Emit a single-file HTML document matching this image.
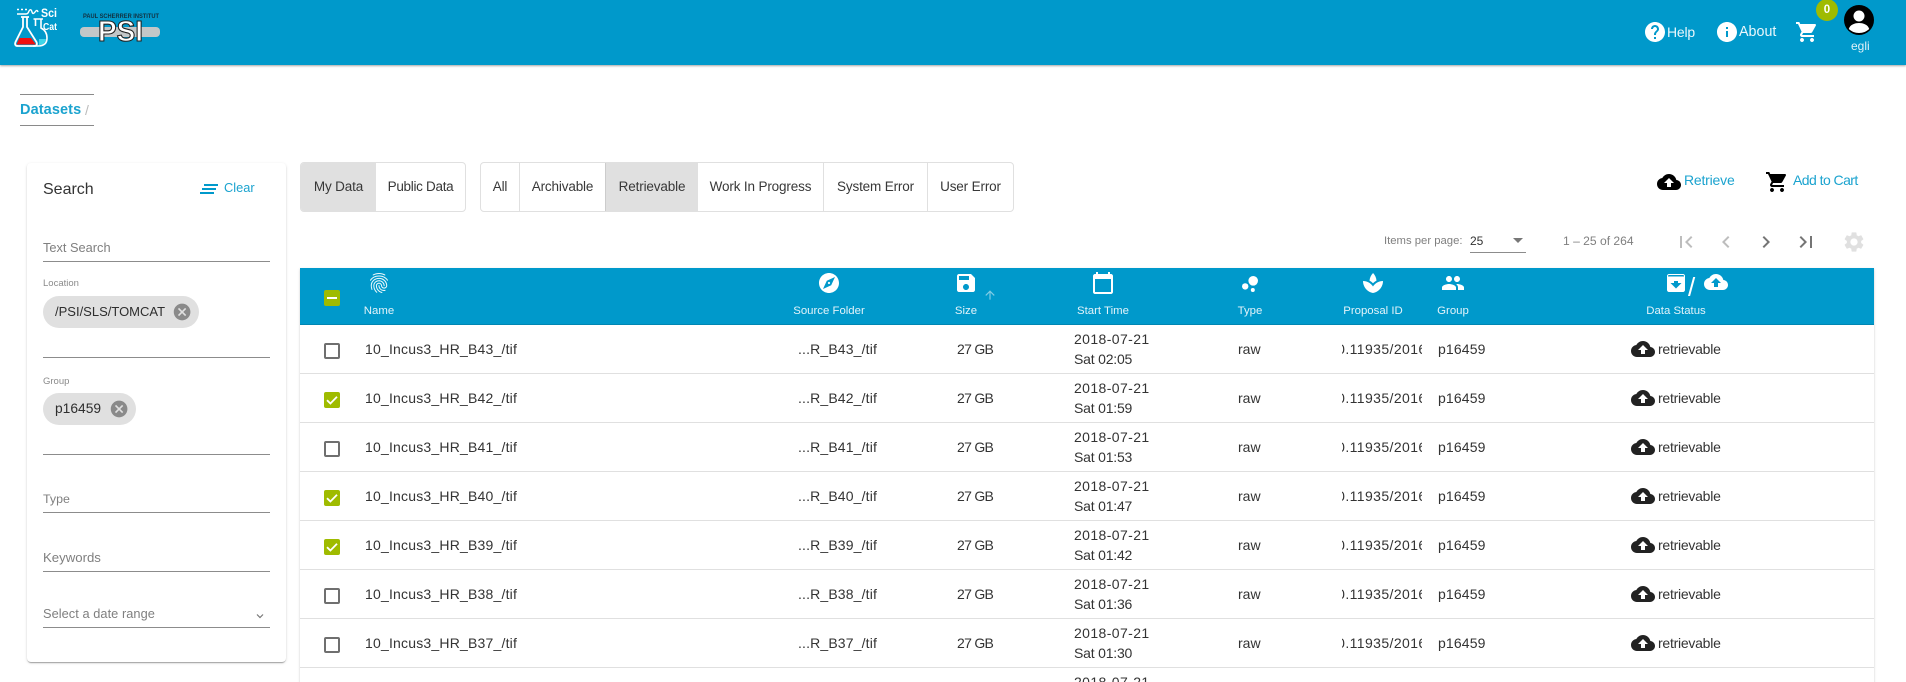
<!DOCTYPE html>
<html><head><meta charset="utf-8"><title>Datasets</title>
<style>
html,body{margin:0;padding:0;width:1906px;height:682px;overflow:hidden;background:#fff}
body{font-family:"Liberation Sans",sans-serif;color:#333;position:relative;font-size:14px}
.a,.t,.i{position:absolute}
.t{white-space:nowrap;line-height:20px}
.i{display:block;overflow:visible}
.bar{position:absolute;left:0;top:0;width:1906px;height:65px;background:#0099cb;box-shadow:0 1px 2px rgba(0,0,0,.35)}
.w{color:#fff}
.ln{position:absolute;left:43px;width:227px;height:1px;background:#8c8c8c}
.lb{color:#7f7f7f;font-size:13px;left:43px}
.sm{color:#8a8a8a;font-size:9.5px;left:43px}
.chip{position:absolute;left:43px;height:32px;border-radius:16px;background:#e0e0e0}
.tg{position:absolute;top:162px;height:50px;box-sizing:border-box;border:1px solid #e0e0e0;border-radius:4px;overflow:hidden;background:#fff}
.tb{position:absolute;top:0;height:48px;line-height:48px;text-align:center;font-size:13.5px;letter-spacing:-.15px;color:#383838;white-space:nowrap;box-sizing:border-box}
.sep{border-left:1px solid #e0e0e0}
.on{background:#e0e0e0}
.hl{font-size:11.4px;color:#e2f3fa;top:301px;transform:translateX(-50%)}
.r{position:absolute;left:300px;width:1574px;height:49px;box-sizing:border-box;border-bottom:1px solid #e0e0e0;background:#fff}
.r .t{font-size:14px;color:#333}
.cb{position:absolute;left:24px;top:18px;width:16px;height:16px;box-sizing:border-box;border:2px solid #6f6f6f;border-radius:2px}
.ck{border:0;background:#9fbb00}
.pc{position:absolute;left:1042px;top:14px;width:80px;height:20px;overflow:hidden}
.n{left:65px;top:14px;letter-spacing:.2px}
.s{left:498px;top:14px;letter-spacing:.15px}
.z{left:657px;top:14px;letter-spacing:-.7px}
.d{left:774px;top:4px;letter-spacing:.4px}
.h{left:774px;top:24px;letter-spacing:-.2px}
.y{left:938px;top:14px}
.g{left:1138px;top:14px;letter-spacing:.15px}
.x{left:1358px;top:14px;letter-spacing:-.25px}
.p{left:-13px;top:0;letter-spacing:.4px}
</style></head>
<body>
<svg width="0" height="0" style="position:absolute">
<symbol id="cart" viewBox="0 0 24 24"><path d="M7 18c-1.100 0-1.990.9-1.990 2S5.900 22 7 22s2-.9 2-2-.9-2-2-2zM1 2v2h2l3.600 7.590-1.350 2.450c-.16.28-.25.61-.25.96 0 1.100.9 2 2 2h12v-2H7.420c-.14 0-.25-.11-.25-.25l.03-.12.9-1.630h7.450c.75 0 1.410-.41 1.750-1.030l3.580-6.490c.08-.14.12-.31.12-.48 0-.55-.45-1-1-1H5.210l-.94-2H1zm16 16c-1.100 0-1.990.9-1.990 2s.89 2 1.990 2 2-.9 2-2-.9-2-2-2z"/></symbol>
<symbol id="cloud" viewBox="0 0 24 24"><path d="M19.350 10.040C18.670 6.590 15.640 4 12 4 9.110 4 6.600 5.640 5.350 8.040 2.340 8.360 0 10.910 0 14c0 3.310 2.690 6 6 6h13c2.760 0 5-2.240 5-5 0-2.640-2.050-4.780-4.650-4.960zM14 13v4h-4v-4H7l5-5 5 5h-3z"/></symbol>
<symbol id="cancel" viewBox="0 0 24 24"><path d="M12 2C6.470 2 2 6.470 2 12s4.470 10 10 10 10-4.470 10-10S17.530 2 12 2zm5 13.590L15.590 17 12 13.410 8.410 17 7 15.590 10.590 12 7 8.410 8.410 7 12 10.590 15.590 7 17 8.410 13.410 12 17 15.590z"/></symbol>
<symbol id="check" viewBox="0 0 16 16"><path d="M3 8.200 L6.400 11.500 L13 4.800" fill="none" stroke="#fff" stroke-width="1.800"/></symbol>
</svg>

<div class="bar"></div>
<!-- SciCat logo -->
<svg class="i" style="left:12px;top:6px" width="48" height="44" viewBox="0 0 48 44">
<path d="M7.500 32 H19 L24 38.500 H4.500Z" fill="#f01010"/>
<path d="M27 33 H34 Q33 39 27 39Z" fill="#3fd6e8"/>
<path d="M11 11 V21 L3.500 36 Q2 40 6 40 H22 Q26 40 24.500 36 L15 21 V11 M9 11 H17" fill="none" stroke="#fff" stroke-width="1.800"/>
<path d="M23.500 13 V20 M29 13 V22 Q35 25 35 32 Q35 40 26 40 H21 M21.500 13 H31" fill="none" stroke="#fff" stroke-width="1.600"/>
<path d="M5 3.500 H7 M9 3.500 H11 M13 3.500 H15 M5 8 H14 Q16 8 17 5 Q19 2 20 6 Q21 9 23 6 Q25 3 26 6" fill="none" stroke="#fff" stroke-width="1.400"/>
<text x="29" y="11" font-family="Liberation Sans,sans-serif" font-size="11.500" font-weight="bold" fill="#fff" textLength="16" lengthAdjust="spacingAndGlyphs">Sci</text>
<text x="31" y="24" font-family="Liberation Sans,sans-serif" font-size="10" font-weight="bold" fill="#fff" textLength="14" lengthAdjust="spacingAndGlyphs">Cat</text>
</svg>
<!-- PSI logo -->
<svg class="i" style="left:78px;top:10px" width="86" height="34" viewBox="0 0 86 34">
<text x="5" y="8" font-family="Liberation Sans,sans-serif" font-size="6.500" font-weight="bold" fill="#12303f" textLength="76" lengthAdjust="spacingAndGlyphs">PAUL SCHERRER INSTITUT</text>
<rect x="2" y="17" width="80" height="10" rx="4" fill="#c3c7c8"/>
<text x="20" y="31" font-family="Liberation Sans,sans-serif" font-size="29" font-weight="bold" fill="#fff" stroke="#222" stroke-width="1.100" textLength="45" lengthAdjust="spacingAndGlyphs">PSI</text>
</svg>

<!-- Top right -->
<svg class="i" style="left:1643px;top:20px" width="24" height="24" viewBox="0 0 24 24" fill="#fff"><path d="M12 2C6.480 2 2 6.480 2 12s4.480 10 10 10 10-4.480 10-10S17.520 2 12 2zm1 17h-2v-2h2v2zm2.070-7.750l-.9.92C13.450 12.900 13 13.500 13 15h-2v-.5c0-1.100.45-2.100 1.170-2.830l1.240-1.260c.37-.36.59-.86.59-1.410 0-1.100-.9-2-2-2s-2 .9-2 2H8c0-2.210 1.790-4 4-4s4 1.790 4 4c0 .88-.36 1.680-.93 2.250z"/></svg>
<div class="t w" style="left:1667px;top:22px;font-size:14px;letter-spacing:-.2px;color:#eaf7fc">Help</div>
<svg class="i" style="left:1715px;top:20px" width="24" height="24" viewBox="0 0 24 24" fill="#fff"><path d="M12 2C6.480 2 2 6.480 2 12s4.480 10 10 10 10-4.480 10-10S17.520 2 12 2zm1 15h-2v-6h2v6zm0-8h-2V7h2v2z"/></svg>
<div class="t w" style="left:1739px;top:22px;font-size:14.300px;color:#eaf7fc">About</div>
<svg class="i" style="left:1795px;top:20px;fill:#fff" width="24" height="24"><use href="#cart"/></svg>
<div class="a" style="left:1816px;top:-1px;width:22px;height:22px;border-radius:50%;background:#9fbb00;color:#fff;font-size:11.500px;font-weight:bold;line-height:22px;text-align:center">0</div>
<svg class="i" style="left:1844px;top:5px" width="30" height="30" viewBox="0 0 30 30"><circle cx="15" cy="15" r="15" fill="#000"/><circle cx="15" cy="11" r="5.500" fill="#fff"/><path d="M4.800 24C6 19.500 11 18 15 18s9 1.500 10.200 6c-2.700 2.500-6.200 4-10.200 4s-7.500-1.500-10.200-4z" fill="#fff"/></svg>
<div class="t" style="left:1851px;top:36px;font-size:12px;color:#dff1f8">egli</div>

<!-- Breadcrumb -->
<div class="a" style="left:20px;top:94px;width:74px;height:1px;background:#8a8a8a"></div>
<div class="a" style="left:20px;top:125px;width:74px;height:1px;background:#8a8a8a"></div>
<div class="t" style="left:20px;top:100px;font-size:14.500px;font-weight:bold;color:#1ba3cf;letter-spacing:.1px">Datasets</div>
<div class="t" style="left:85px;top:100px;font-size:14px;color:#bbb">/</div>

<!-- Search card -->
<div class="a" style="left:27px;top:163px;width:259px;height:499px;background:#fff;border-radius:4px;box-shadow:0 2px 1px -1px rgba(0,0,0,.2),0 1px 1px 0 rgba(0,0,0,.14),0 1px 3px 0 rgba(0,0,0,.12)"></div>
<div class="t" style="left:43px;top:180px;font-size:16px;color:#333">Search</div>
<svg class="i" style="left:199px;top:177px;fill:#0099cb" width="20" height="24" viewBox="2 0 20 24"><path d="M5 13h14v-2H5v2zm-2 4h14v-2H3v2zM7 7v2h14V7H7z"/></svg>
<div class="t" style="left:224px;top:178px;font-size:12.800px;color:#1ba3cf">Clear</div>

<div class="t lb" style="top:238px;font-size:12.800px">Text Search</div>
<div class="ln" style="top:261px"></div>
<div class="t sm" style="top:274px">Location</div>
<div class="chip" style="top:296px;width:156px"></div>
<div class="t" style="left:55px;top:302px;font-size:13px;color:#2e2e2e">/PSI/SLS/TOMCAT</div>
<svg class="i" style="left:173px;top:300px;fill:#8a8a8a" width="20" height="24" viewBox="1 0 22 24"><use href="#cancel"/></svg>
<div class="ln" style="top:357px"></div>
<div class="t sm" style="top:372px">Group</div>
<div class="chip" style="top:393px;width:93px"></div>
<div class="t" style="left:55px;top:399px;font-size:13.800px;color:#2e2e2e">p16459</div>
<svg class="i" style="left:110px;top:397px;fill:#8a8a8a" width="20" height="24" viewBox="1 0 22 24"><use href="#cancel"/></svg>
<div class="ln" style="top:454px"></div>
<div class="t lb" style="top:489px;font-size:12.400px">Type</div>
<div class="ln" style="top:512px"></div>
<div class="t lb" style="top:548px;font-size:13.200px">Keywords</div>
<div class="ln" style="top:571px"></div>
<div class="t lb" style="top:604px;font-size:12.800px;letter-spacing:.05px">Select a date range</div>
<svg class="i" style="left:255px;top:611px" width="10" height="10" viewBox="0 0 10 10"><path d="M2 3.500 L5 6.500 L8 3.500" fill="none" stroke="#777" stroke-width="1.200"/></svg>
<div class="ln" style="top:627px"></div>

<!-- Toggle groups -->
<div class="tg" style="left:300px;width:166px">
  <div class="tb on" style="left:0;width:75px">My Data</div>
  <div class="tb" style="left:75px;width:89px;letter-spacing:-.3px">Public Data</div>
</div>
<div class="tg" style="left:480px;width:534px">
  <div class="tb" style="left:0;width:38px">All</div>
  <div class="tb sep" style="left:38px;width:86px">Archivable</div>
  <div class="tb sep on" style="left:124px;width:93px;border-color:#ccc">Retrievable</div>
  <div class="tb" style="left:217px;width:125px">Work In Progress</div>
  <div class="tb sep" style="left:342px;width:104px">System Error</div>
  <div class="tb sep" style="left:446px;width:86px">User Error</div>
</div>

<!-- Actions -->
<svg class="i" style="left:1657px;top:170px;fill:#000" width="24" height="24"><use href="#cloud"/></svg>
<div class="t" style="left:1684px;top:170px;font-size:14px;color:#1ba3cf;letter-spacing:-.2px">Retrieve</div>
<svg class="i" style="left:1765px;top:170px;fill:#000" width="24" height="24"><use href="#cart"/></svg>
<div class="t" style="left:1793px;top:170px;font-size:14px;color:#1ba3cf;letter-spacing:-.55px">Add to Cart</div>

<!-- Paginator -->
<div class="t" style="left:1384px;top:231px;font-size:11.300px;color:#7f7f7f">Items per page:</div>
<div class="t" style="left:1470px;top:231px;font-size:12px;color:#333">25</div>
<div class="a" style="left:1513px;top:238px;width:0;height:0;border-left:5px solid transparent;border-right:5px solid transparent;border-top:5px solid #777"></div>
<div class="a" style="left:1470px;top:252px;width:56px;height:1px;background:#8c8c8c"></div>
<div class="t" style="left:1563px;top:231px;font-size:12.100px;color:#7f7f7f">1 – 25 of 264</div>
<svg class="i" style="left:1674px;top:230px" width="24" height="24" viewBox="0 0 24 24" fill="#bdbdbd"><path d="M18.410 16.590L13.820 12l4.590-4.590L17 6l-6 6 6 6zM6 6h2v12H6z"/></svg>
<svg class="i" style="left:1714px;top:230px" width="24" height="24" viewBox="0 0 24 24" fill="#bdbdbd"><path d="M15.410 7.410L14 6l-6 6 6 6 1.410-1.410L10.830 12z"/></svg>
<svg class="i" style="left:1754px;top:230px" width="24" height="24" viewBox="0 0 24 24" fill="#757575"><path d="M10 6L8.590 7.410 13.170 12l-4.580 4.590L10 18l6-6z"/></svg>
<svg class="i" style="left:1794px;top:230px" width="24" height="24" viewBox="0 0 24 24" fill="#757575"><path d="M5.590 7.410L10.180 12l-4.590 4.590L7 18l6-6-6-6zM16 6h2v12h-2z"/></svg>
<svg class="i" style="left:1842px;top:230px" width="24" height="24" viewBox="0 0 24 24" fill="#e0e0e0"><path d="M19.140 12.940c.04-.3.06-.61.06-.94 0-.32-.02-.64-.07-.94l2.030-1.580c.18-.14.23-.41.12-.61l-1.920-3.320c-.12-.22-.37-.29-.59-.22l-2.390.96c-.5-.38-1.030-.7-1.620-.94l-.36-2.540c-.04-.24-.24-.41-.48-.41h-3.840c-.24 0-.43.17-.47.41l-.36 2.540c-.59.24-1.130.57-1.620.94l-2.390-.96c-.22-.08-.47 0-.59.22L2.740 8.870c-.12.21-.08.47.12.61l2.030 1.580c-.05.3-.09.63-.09.94s.02.64.07.94l-2.030 1.580c-.18.14-.23.41-.12.61l1.920 3.320c.12.22.37.29.59.22l2.390-.96c.5.38 1.030.7 1.620.94l.36 2.540c.05.24.24.41.48.41h3.840c.24 0 .44-.17.47-.41l.36-2.540c.59-.24 1.130-.56 1.620-.94l2.390.96c.22.08.47 0 .59-.22l1.920-3.320c.12-.22.07-.47-.12-.61l-2.010-1.580zM12 15.600c-1.980 0-3.600-1.620-3.600-3.600s1.620-3.600 3.600-3.600 3.600 1.620 3.600 3.600-1.620 3.600-3.600 3.600z"/></svg>

<!-- Table -->
<div class="a" style="left:300px;top:268px;width:1574px;height:430px;background:#fff;box-shadow:0 2px 1px -1px rgba(0,0,0,.2),0 1px 1px 0 rgba(0,0,0,.14),0 1px 3px 0 rgba(0,0,0,.12)"></div>
<div class="a" style="left:300px;top:268px;width:1574px;height:57px;box-sizing:border-box;background:#0099cb;border-bottom:1px solid #0086b2"></div>
<div class="a" style="left:324px;top:290px;width:16px;height:16px;background:#9fbb00;border-radius:2px"><div class="a" style="left:3px;top:7px;width:10px;height:2px;background:#fff"></div></div>

<svg class="i" style="left:367px;top:271px" width="24" height="24" viewBox="0 0 24 24" fill="#eef9fc"><path d="M17.810 4.470c-.08 0-.16-.02-.23-.06C15.660 3.420 14 3 12.010 3c-1.980 0-3.860.47-5.570 1.410-.24.13-.54.04-.68-.2-.13-.24-.04-.55.2-.68C7.820 2.520 9.860 2 12.010 2c2.130 0 3.990.47 6.030 1.520.25.13.34.43.21.67-.09.18-.26.28-.44.28zM3.500 9.720c-.1 0-.2-.03-.29-.09-.23-.16-.28-.47-.12-.7.99-1.400 2.250-2.500 3.750-3.270C9.980 4.040 14 4.030 17.150 5.650c1.500.77 2.760 1.860 3.750 3.250.16.22.11.54-.12.7-.23.16-.54.11-.7-.12-.9-1.260-2.040-2.250-3.390-2.940-2.870-1.470-6.540-1.470-9.400.01-1.360.7-2.500 1.700-3.400 2.960-.08.14-.23.21-.39.21zm6.250 12.070c-.13 0-.26-.05-.35-.15-.87-.87-1.340-1.430-2.010-2.640-.69-1.230-1.050-2.730-1.050-4.340 0-2.970 2.540-5.390 5.660-5.390s5.660 2.420 5.660 5.390c0 .28-.22.5-.5.5s-.5-.22-.5-.5c0-2.420-2.090-4.390-4.660-4.390-2.570 0-4.660 1.970-4.660 4.390 0 1.440.32 2.770.93 3.850.64 1.150 1.080 1.640 1.850 2.420.19.2.19.51 0 .71-.11.1-.24.15-.37.15zm7.170-1.850c-1.190 0-2.240-.3-3.100-.89-1.490-1.010-2.380-2.650-2.380-4.390 0-.28.22-.5.5-.5s.5.22.5.5c0 1.410.72 2.740 1.940 3.560.71.48 1.540.71 2.540.71.24 0 .64-.03 1.040-.1.27-.05.53.13.58.41.05.27-.13.53-.41.58-.57.11-1.070.12-1.210.12zM14.910 22c-.04 0-.09-.01-.13-.02-1.590-.44-2.630-1.030-3.720-2.100-1.400-1.390-2.170-3.240-2.170-5.220 0-1.620 1.380-2.940 3.080-2.940 1.700 0 3.080 1.320 3.080 2.940 0 1.070.93 1.940 2.080 1.940s2.080-.87 2.080-1.940c0-3.770-3.250-6.830-7.250-6.830-2.840 0-5.440 1.580-6.610 4.030-.39.81-.59 1.760-.59 2.800 0 .78.07 2.010.67 3.610.1.260-.03.550-.29.640-.26.1-.55-.04-.64-.29-.49-1.310-.73-2.610-.73-3.960 0-1.200.23-2.290.68-3.240 1.330-2.790 4.280-4.600 7.510-4.600 4.550 0 8.250 3.510 8.250 7.830 0 1.620-1.380 2.940-3.080 2.940s-3.080-1.320-3.080-2.940c0-1.070-.93-1.940-2.080-1.940s-2.080.87-2.080 1.940c0 1.710.66 3.310 1.870 4.510.95.94 1.860 1.460 3.270 1.850.27.07.42.35.35.61-.05.23-.26.38-.47.38z"/></svg>
<svg class="i" style="left:817px;top:271px" width="24" height="24" viewBox="0 0 24 24" fill="#fff"><path d="M12 10.900c-.61 0-1.100.49-1.100 1.100s.49 1.100 1.100 1.100c.61 0 1.100-.49 1.100-1.100s-.49-1.100-1.100-1.100zM12 2C6.480 2 2 6.480 2 12s4.480 10 10 10 10-4.480 10-10S17.520 2 12 2zm2.190 12.190L6 18l3.810-8.190L18 6l-3.810 8.190z"/></svg>
<svg class="i" style="left:954px;top:271px" width="24" height="24" viewBox="0 0 24 24" fill="#fff"><path d="M17 3H5c-1.110 0-2 .9-2 2v14c0 1.100.89 2 2 2h14c1.100 0 2-.9 2-2V7l-4-4zm-5 16c-1.660 0-3-1.340-3-3s1.340-3 3-3 3 1.340 3 3-1.340 3-3 3zm3-10H5V5h10v4z"/></svg>
<svg class="i" style="left:983px;top:288px" width="14" height="14" viewBox="0 0 24 24" fill="#80cce5"><path d="M4 12l1.410 1.410L11 7.830V20h2V7.830l5.580 5.590L20 12l-8-8-8 8z"/></svg>
<svg class="i" style="left:1091px;top:271px" width="24" height="24" viewBox="0 0 24 24" fill="#fff"><path d="M20 3h-1V1h-2v2H7V1H5v2H4c-1.100 0-2 .9-2 2v16c0 1.100.9 2 2 2h16c1.100 0 2-.9 2-2V5c0-1.100-.9-2-2-2zm0 18H4V8h16v13z"/></svg>
<svg class="i" style="left:1238px;top:272px" width="24" height="24" viewBox="0 0 24 24" fill="#fff"><circle cx="7.200" cy="14.400" r="3.200"/><circle cx="14.800" cy="18" r="2"/><circle cx="15.200" cy="8.800" r="4.800"/></svg>
<svg class="i" style="left:1361px;top:271px" width="24" height="24" viewBox="0 0 24 24" fill="#fff"><path d="M15.490 9.630c-.18-2.790-1.310-5.510-3.430-7.630-2.140 2.140-3.320 4.860-3.550 7.630 1.280.68 2.460 1.560 3.490 2.630 1.030-1.060 2.210-1.940 3.490-2.630zM12 15.450C9.850 12.170 6.180 10 2 10c0 5.320 3.360 9.820 8.030 11.490.63.23 1.290.4 1.970.51.68-.12 1.330-.29 1.970-.51C18.640 19.820 22 15.320 22 10c-4.180 0-7.850 2.170-10 5.450z"/></svg>
<svg class="i" style="left:1441px;top:271px" width="24" height="24" viewBox="0 0 24 24" fill="#fff"><path d="M16 11c1.660 0 2.990-1.340 2.990-3S17.660 5 16 5c-1.660 0-3 1.340-3 3s1.340 3 3 3zm-8 0c1.660 0 2.990-1.340 2.990-3S9.660 5 8 5C6.340 5 5 6.340 5 8s1.340 3 3 3zm0 2c-2.330 0-7 1.170-7 3.500V19h14v-2.500c0-2.330-4.670-3.500-7-3.500zm8 0c-.29 0-.62.02-.97.05 1.160.84 1.970 1.970 1.970 3.450V19h6v-2.500c0-2.330-4.670-3.500-7-3.500z"/></svg>
<svg class="i" style="left:1664px;top:271px" width="24" height="24" viewBox="0 0 24 24" fill="#fff"><path d="M5 3h14c1.100 0 2 .9 2 2v14c0 1.100-.9 2-2 2H5c-1.100 0-2-.9-2-2V5c0-1.100.9-2 2-2zm7 14.500l5.500-5.500H14v-2h-4v2H6.500L12 17.500zM4 5.500h16V5c0-.6-.4-1-1-1H5c-.6 0-1 .4-1 1v.5z"/></svg>
<div class="t w" style="left:1688px;top:277px;font-size:26px;line-height:20px">/</div>
<svg class="i" style="left:1704px;top:270px;fill:#fff" width="24" height="24"><use href="#cloud"/></svg>

<div class="t hl" style="left:379px">Name</div>
<div class="t hl" style="left:829px">Source Folder</div>
<div class="t hl" style="left:966px">Size</div>
<div class="t hl" style="left:1103px">Start Time</div>
<div class="t hl" style="left:1250px">Type</div>
<div class="t hl" style="left:1373px">Proposal ID</div>
<div class="t hl" style="left:1453px">Group</div>
<div class="t hl" style="left:1676px">Data Status</div>

<div class="r" style="top:325px"><div class="cb"></div><div class="t n">10_Incus3_HR_B43_/tif</div><div class="t s">...R_B43_/tif</div><div class="t z">27 GB</div><div class="t d">2018-07-21</div><div class="t h">Sat 02:05</div><div class="t y">raw</div><div class="pc"><div class="t p">10.11935/2016/0001</div></div><div class="t g">p16459</div><svg class="i" style="left:1331px;top:12px;fill:#222" width="24" height="24"><use href="#cloud"/></svg><div class="t x">retrievable</div></div>
<div class="r" style="top:374px"><div class="cb ck"><svg class="i" style="left:0;top:0" width="16" height="16"><use href="#check"/></svg></div><div class="t n">10_Incus3_HR_B42_/tif</div><div class="t s">...R_B42_/tif</div><div class="t z">27 GB</div><div class="t d">2018-07-21</div><div class="t h">Sat 01:59</div><div class="t y">raw</div><div class="pc"><div class="t p">10.11935/2016/0001</div></div><div class="t g">p16459</div><svg class="i" style="left:1331px;top:12px;fill:#222" width="24" height="24"><use href="#cloud"/></svg><div class="t x">retrievable</div></div>
<div class="r" style="top:423px"><div class="cb"></div><div class="t n">10_Incus3_HR_B41_/tif</div><div class="t s">...R_B41_/tif</div><div class="t z">27 GB</div><div class="t d">2018-07-21</div><div class="t h">Sat 01:53</div><div class="t y">raw</div><div class="pc"><div class="t p">10.11935/2016/0001</div></div><div class="t g">p16459</div><svg class="i" style="left:1331px;top:12px;fill:#222" width="24" height="24"><use href="#cloud"/></svg><div class="t x">retrievable</div></div>
<div class="r" style="top:472px"><div class="cb ck"><svg class="i" style="left:0;top:0" width="16" height="16"><use href="#check"/></svg></div><div class="t n">10_Incus3_HR_B40_/tif</div><div class="t s">...R_B40_/tif</div><div class="t z">27 GB</div><div class="t d">2018-07-21</div><div class="t h">Sat 01:47</div><div class="t y">raw</div><div class="pc"><div class="t p">10.11935/2016/0001</div></div><div class="t g">p16459</div><svg class="i" style="left:1331px;top:12px;fill:#222" width="24" height="24"><use href="#cloud"/></svg><div class="t x">retrievable</div></div>
<div class="r" style="top:521px"><div class="cb ck"><svg class="i" style="left:0;top:0" width="16" height="16"><use href="#check"/></svg></div><div class="t n">10_Incus3_HR_B39_/tif</div><div class="t s">...R_B39_/tif</div><div class="t z">27 GB</div><div class="t d">2018-07-21</div><div class="t h">Sat 01:42</div><div class="t y">raw</div><div class="pc"><div class="t p">10.11935/2016/0001</div></div><div class="t g">p16459</div><svg class="i" style="left:1331px;top:12px;fill:#222" width="24" height="24"><use href="#cloud"/></svg><div class="t x">retrievable</div></div>
<div class="r" style="top:570px"><div class="cb"></div><div class="t n">10_Incus3_HR_B38_/tif</div><div class="t s">...R_B38_/tif</div><div class="t z">27 GB</div><div class="t d">2018-07-21</div><div class="t h">Sat 01:36</div><div class="t y">raw</div><div class="pc"><div class="t p">10.11935/2016/0001</div></div><div class="t g">p16459</div><svg class="i" style="left:1331px;top:12px;fill:#222" width="24" height="24"><use href="#cloud"/></svg><div class="t x">retrievable</div></div>
<div class="r" style="top:619px"><div class="cb"></div><div class="t n">10_Incus3_HR_B37_/tif</div><div class="t s">...R_B37_/tif</div><div class="t z">27 GB</div><div class="t d">2018-07-21</div><div class="t h">Sat 01:30</div><div class="t y">raw</div><div class="pc"><div class="t p">10.11935/2016/0001</div></div><div class="t g">p16459</div><svg class="i" style="left:1331px;top:12px;fill:#222" width="24" height="24"><use href="#cloud"/></svg><div class="t x">retrievable</div></div>
<div class="r" style="top:668px;height:14px;border:0"><div class="t d">2018-07-21</div></div>
</body></html>
